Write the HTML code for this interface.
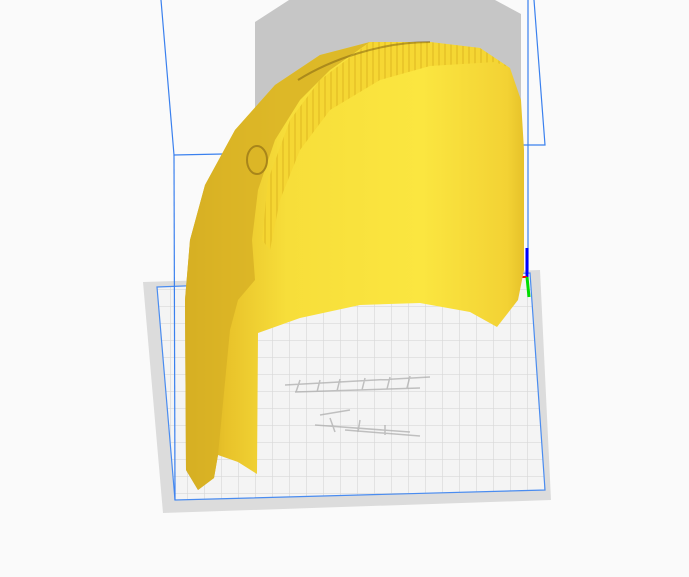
<!DOCTYPE html><html><head><style>html,body{margin:0;padding:0;background:#fafafa;width:689px;height:577px;overflow:hidden}</style></head><body>
<svg width="689" height="577" viewBox="0 0 689 577" xmlns="http://www.w3.org/2000/svg">
<defs>
<linearGradient id="y" x1="0" x2="1" y1="0" y2="0">
<stop offset="0" stop-color="#c9a21c"/><stop offset="0.12" stop-color="#e8c22a"/><stop offset="0.3" stop-color="#f7de3a"/><stop offset="0.7" stop-color="#fbe640"/><stop offset="0.95" stop-color="#f3d234"/><stop offset="1" stop-color="#e6c22a"/>
</linearGradient>
<pattern id="stripe" width="6" height="10" patternUnits="userSpaceOnUse"><rect width="6" height="10" fill="#f5d632"/><rect width="2" height="10" fill="#e8c428"/></pattern>
<pattern id="g" width="17" height="17" patternUnits="userSpaceOnUse"><rect width="17" height="17" fill="#f4f4f4"/><path d="M0 0H17M0 0V17" stroke="#d9d9d9" stroke-width="1.3"/></pattern>
</defs>
<rect width="689" height="577" fill="#fafafa"/>
<polygon points="255,22 289,0 495,0 521,14 521,290 255,290" fill="#c6c6c6"/>
<polygon points="143,282 540,270 551,500 163,513" fill="#dcdcdc"/>
<polygon points="157,287 530,273 545,490 175,500" fill="url(#g)"/>
<polygon points="157,287 530,273 545,490 175,500" fill="none" stroke="#4a8cf0" stroke-width="1.2"/>
<path d="M161 0 L174 155 L223 154" stroke="#3a80ee" fill="none" stroke-width="1.2"/>
<path d="M174 155 L175 500" stroke="#3a80ee" stroke-width="1.2"/>
<path d="M528 0 L528 270 M534 0 L545 145 L522 145" stroke="#3a80ee" fill="none" stroke-width="1.2"/>
<path d="M527 248 V277" stroke="#0000ff" stroke-width="3"/>
<path d="M521 277 H527" stroke="#ff0000" stroke-width="2"/>
<path d="M527 277 L529 297" stroke="#00dd00" stroke-width="3"/>
<g stroke="#aaa" stroke-width="1.5" fill="none" opacity="0.7">
<path d="M285 385 L430 377 M295 392 L420 388 M300 380 l-4 12 M320 380 l-3 12 M340 379 l-3 12 M365 378 l-3 12 M390 377 l-3 12 M410 376 l-3 12"/>
<path d="M320 415 L350 410 M315 425 L410 432 M330 418 l5 14 M360 420 l-2 12 M385 425 l0 10 M345 430 L420 436"/>
</g>
<path d="M198 490 L186 470 L185 300 L190 240 L205 185 L235 130 L275 85 L320 55 L370 42 L430 42 L480 48 L510 68 L521 100 L524 150 L524 270 L518 300 L497 327 L470 312 L420 303 L360 305 L300 318 L258 333 L257 474 L238 462 L218 455 L214 478 Z" fill="url(#y)"/>
<path d="M190 240 L205 185 L235 130 L275 85 L320 55 L370 42 L330 70 L300 100 L275 140 L258 190 L252 240 L255 280 L238 300 L230 330 L218 455 L214 478 L198 490 L186 470 L185 300 Z" fill="#d8b224" opacity="0.85"/>
<path d="M370 42 L430 42 L480 48 L510 68 L495 62 L430 66 L380 80 L330 110 L300 150 L280 200 L270 250 L262 240 L268 180 L290 120 L320 80 Z" fill="url(#stripe)" opacity="0.9"/>
<path d="M298 80 C 330 60 380 42 430 42" stroke="#7a5c10" stroke-width="2" fill="none" opacity="0.5"/>
<ellipse cx="257" cy="160" rx="10" ry="14" fill="none" stroke="#a8851a" stroke-width="2"/>
</svg>
</body></html>
